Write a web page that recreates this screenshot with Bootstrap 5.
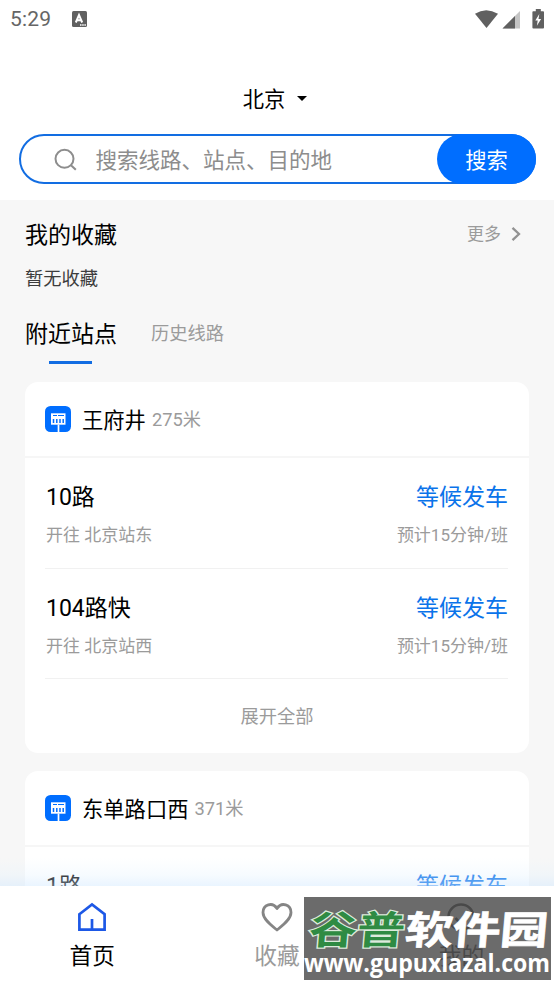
<!DOCTYPE html>
<html lang="zh-CN">
<head>
<meta charset="utf-8">
<meta name="viewport" content="width=device-width, initial-scale=1">
<title>北京公交</title>
<link href="https://cdn.jsdelivr.net/npm/bootstrap@5.3.0/dist/css/bootstrap.min.css" rel="stylesheet">
<style>
body{font-family:Roboto,"Noto Sans CJK SC",sans-serif;color:#000;background:#f7f7f7;line-height:1;overflow:hidden}
.screen{width:554px;height:984px;overflow:hidden}
.statusbar{height:38px;padding:0 9px 0 10px;color:#666;font-size:21px;letter-spacing:.15px}
.badge-a{margin-left:21px}
.topbar{height:200px}
.city{height:58px;margin-top:31px;font-size:21.3px;padding-right:4px}
.city span{padding-top:3px}
.city svg{margin-left:12px}
.searchbox{height:50px;margin:7px 18.5px 0 18.5px;border:2.5px solid #126de2;padding-left:33px}
.searchbox .hint{font-size:21.5px;line-height:30px;color:#8d8d8d;margin-left:19px;padding-top:3px}
.searchbtn{width:99px;height:50px;margin:-2.5px;background:#006eff!important;font-size:21.3px}
.t23{font-size:23px;line-height:30px;padding-top:2px;margin-bottom:-2px}
.t21{font-size:21.3px;line-height:30px;padding-top:3px}
.t18{font-size:18.3px;line-height:26px;padding-top:1px;margin-bottom:-1px}
.t17{font-size:17px;line-height:24px}
.gray9{color:#9b9b9b}
.blue{color:#0a73ea}
.favs{padding:19px 32px 0 25px}
.more svg{margin-left:9px}
.favnone{margin-top:16px;color:#3d3d3d}
.tabs{padding:27px 25px 0}
.tabs .bar{width:43px;height:3px;background:#126de2;margin:13px 0 0 24px}
.history{margin-left:34px}
.station{width:504px;margin:18px 0 0 25px;border-radius:13px!important}
.shead{height:76px;padding:0 20px;border-bottom:2px solid #f6f6f6}
.shead .t21{margin-left:11px}
.shead .t18{margin-left:6px}
.route{height:110.500px;margin:0 21px 0 20px;padding:23px 0 0 1px;border-bottom:1px solid #f1f1f1}
.route .second{margin-top:12px}
.expand{height:75px}
.bottomnav{height:98px;z-index:5}
.bottomnav .glow{height:28px;top:-28px;background:linear-gradient(rgba(225,241,255,0),rgba(222,240,255,.25) 60%,rgba(208,232,255,.45))}
.navcell{width:184.6px;padding-top:16px}
.navcell span{font-size:22.7px;line-height:30px;margin-top:10px}
.navmine{color:#555}
.wm{left:303px;top:10px;z-index:6}
.wm text{font-family:"Noto Sans CJK SC",sans-serif;font-weight:700}
.wm .site{font-family:"Open Sans","Noto Sans",sans-serif;font-weight:700}
</style>
<script src="https://cdn.jsdelivr.net/npm/bootstrap@5.3.0/dist/js/bootstrap.bundle.min.js"></script>
</head>
<body>
<svg class="d-none"><symbol id="stop" viewBox="0 0 26 26"><rect width="26" height="26" rx="5.500" fill="#006eff"/><path d="M6 7.300h14.500v11.400H6z" fill="#fff"/><path d="M8 9.500h4M13 9.500h6" stroke="#006eff" stroke-width="1"/><path d="M8.500 13v4M11.800 13v4M15 13v4M18.200 13v4" stroke="#006eff" stroke-width="1.500"/><path d="M13.500 18.500V26" stroke="#fff" stroke-width="1.700"/></symbol></svg>
<div class="screen d-flex flex-column position-relative">
  <header class="topbar bg-white flex-shrink-0">
    <div class="statusbar d-flex align-items-center justify-content-between">
      <div class="d-flex align-items-center"><span>5:29</span>
        <svg class="badge-a" width="15" height="16" viewBox="0 0 15 16"><rect width="15" height="16" rx="1.500" fill="#606060"/><path d="M3.800 11.500 7 4l3.200 7.500M5 9.300h4" fill="none" stroke="#fff" stroke-width="2"/><path d="M8 14h6" stroke="#fff" stroke-width="1.400" stroke-dasharray="1.500 .7"/></svg>
      </div>
      <svg width="72" height="22" viewBox="0 0 72 22"><path d="M2 5.700Q13-1.300 25 5.700L13.500 20z" fill="#606060"/><path d="M29.500 20.500 47 3v17.500z" fill="#c4c4c4"/><path d="M29.500 20.500 42 8v12.500z" fill="#606060"/><path d="M60.300 3.200h2.500V1h5v2.200h2.300q.9 0 .9.900v15.500q0 .9-.9.900h-9.800q-.9 0-.9-.9V4.100q0-.9.900-.9z" fill="#606060"/><path d="M66.300 6 62.300 12.400h2.400l-.8 5.300 4.200-6.700h-2.600z" fill="#fff"/></svg>
    </div>
    <div class="city d-flex align-items-center justify-content-center"><span>北京</span><svg width="10" height="5"><path d="M0 0h10L5 5z"/></svg></div>
    <div class="searchbox rounded-pill d-flex align-items-center">
      <svg width="23" height="23" viewBox="0 0 23 23" fill="none" stroke="#8d8d8d" stroke-width="2"><circle cx="10.500" cy="10.800" r="9"/><path d="m17 17.200 4.800 4.500"/></svg>
      <span class="hint">搜索线路、站点、目的地</span>
      <button class="searchbtn btn btn-primary border-0 rounded-pill ms-auto p-0 pt-1">搜索</button>
    </div>
  </header>
  <main class="flex-grow-1 overflow-hidden">
    <section class="favs">
      <div class="d-flex align-items-center justify-content-between"><span class="t23">我的收藏</span><a class="more t17 gray9 text-decoration-none d-flex align-items-center" href="#">更多<svg width="12" height="16" viewBox="0 0 12 16"><path d="m2.500 1.800 6.500 6.200-6.500 6.200" fill="none" stroke="#929292" stroke-width="2.300"/></svg></a></div>
      <div class="favnone t18">暂无收藏</div>
    </section>
    <section class="tabs">
      <div class="d-flex align-items-center"><span class="t23">附近站点</span><span class="history t18 gray9">历史线路</span></div>
      <div class="bar"></div>
    </section>
    <section class="station card border-0">
      <div class="shead d-flex align-items-center"><svg width="26" height="26"><use href="#stop"/></svg><span class="t21">王府井</span><span class="t18 gray9">275米</span></div>
      <div class="route"><div class="d-flex justify-content-between t23"><span>10路</span><span class="blue">等候发车</span></div><div class="second d-flex justify-content-between t17 gray9"><span>开往 北京站东</span><span>预计15分钟/班</span></div></div>
      <div class="route"><div class="d-flex justify-content-between t23"><span>104路快</span><span class="blue">等候发车</span></div><div class="second d-flex justify-content-between t17 gray9"><span>开往 北京站西</span><span>预计15分钟/班</span></div></div>
      <div class="expand d-flex align-items-center justify-content-center t18 gray9">展开全部</div>
    </section>
    <section class="station card border-0">
      <div class="shead d-flex align-items-center"><svg width="26" height="26"><use href="#stop"/></svg><span class="t21">东单路口西</span><span class="t18 gray9">371米</span></div>
      <div class="route"><div class="d-flex justify-content-between t23"><span>1路</span><span class="blue">等候发车</span></div></div>
    </section>
  </main>
  <nav class="bottomnav bg-white d-flex flex-shrink-0 position-relative">
    <div class="glow position-absolute start-0 w-100"></div>
    <div class="navcell d-flex flex-column align-items-center"><svg width="30" height="30" viewBox="0 0 30 30" fill="none" stroke="#1d58e6" stroke-width="2.700"><path d="M2.400 12.200 15 2.500l12.600 9.700v15.500H2.400zM15 27.500V17"/></svg><span>首页</span></div>
    <div class="navcell d-flex flex-column align-items-center gray9"><svg width="32" height="30" viewBox="0 0 32 30" fill="none" stroke="#858585" stroke-width="2.800" stroke-linejoin="round"><path d="M16 28C11 24 2 17.500 2 10.500 2 2.500 11.500-.5 16 6.500 20.500-.5 30 2.500 30 10.500 30 17.500 21 24 16 28z"/></svg><span>收藏</span></div>
    <div class="navcell navmine d-flex flex-column align-items-center"><svg width="30" height="30" viewBox="0 0 30 30" fill="none" stroke="#555" stroke-width="2.600"><circle cx="15" cy="15" r="12.500"/><path d="M9.500 16q5.500 8 11 0"/></svg><span>我的</span></div>
    <svg class="wm position-absolute" width="251" height="88" viewBox="0 0 251 88">
      <rect x="1" y="1" width="247" height="83" fill="#464646" fill-opacity=".8"/>
      <g transform="translate(5 48) skewX(-5) scale(1 .81)"><text font-size="48" textLength="96" fill="#2f8b43" stroke="#dcebdc" stroke-width="3" paint-order="stroke">谷普</text><text x="96" font-size="48" textLength="143" fill="#fff" stroke="#fff" stroke-width=".8">软件园</text></g>
      <text class="site" x="1" y="76" font-size="25" textLength="246" lengthAdjust="spacingAndGlyphs" fill="#fff">www.gupuxlazal.com</text>
    </svg>
  </nav>
</div>
</body>
</html>
